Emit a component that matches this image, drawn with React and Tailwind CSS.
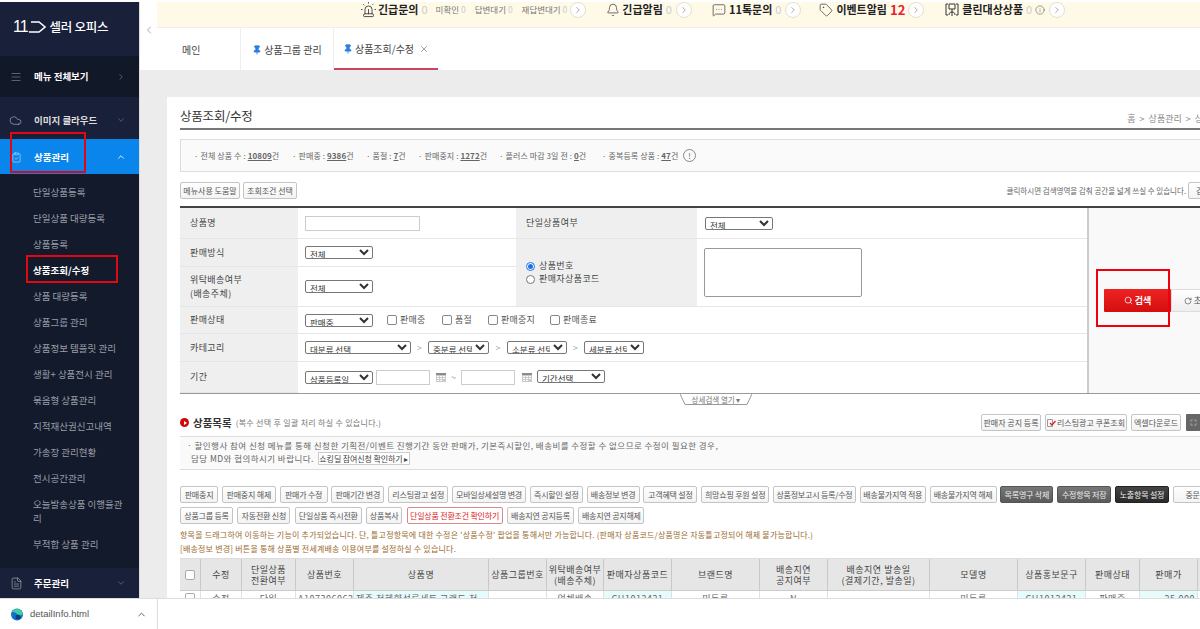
import { Menu, Cloud, ChevronRight, ChevronDown, ChevronUp, ChevronLeft, Bell, MessageSquareMore, Tag, Pin, X, Siren, Search, RotateCw, Info, FileText, ClipboardCheck, Maximize } from "lucide-react";

const subMenus = [
  "단일상품등록",
  "단일상품 대량등록",
  "상품등록",
  "상품조회/수정",
  "상품 대량등록",
  "상품그룹 관리",
  "상품정보 템플릿 관리",
  "생활+ 상품전시 관리",
  "묶음형 상품관리",
  "지적재산권신고내역",
  "가송장 관리현황",
  "전시공간관리",
  "오늘발송상품 이행율관리",
  "부적합 상품 관리",
];

const actionRow1 = [
  ["판매중지", "w-[38px]", "w"],
  ["판매중지 해제", "w-[54px]", "w"],
  ["판매가 수정", "w-[48px]", "w"],
  ["판매기간 변경", "w-[53px]", "w"],
  ["리스팅광고 설정", "w-[60px]", "w"],
  ["모바일상세설명 변경", "w-[74px]", "w"],
  ["즉시할인 설정", "w-[53px]", "w"],
  ["배송정보 변경", "w-[53px]", "w"],
  ["고객혜택 설정", "w-[54px]", "w"],
  ["희망쇼핑 후원 설정", "w-[68px]", "w"],
  ["상품정보고시 등록/수정", "w-[83px]", "w"],
  ["배송불가지역 적용", "w-[66px]", "w"],
  ["배송불가지역 해제", "w-[67px]", "w"],
  ["목록영구 삭제", "w-[53px]", "g"],
  ["수정항목 저장", "w-[54px]", "g"],
  ["노출항목 설정", "w-[54px]", "k"],
  ["중문번역", "w-[54px]", "w"],
];

const actionRow2 = [
  ["상품그룹 등록", "w-[53px]", "w"],
  ["자동전환 신청", "w-[53px]", "w"],
  ["단일상품 즉시전환", "w-[67px]", "w"],
  ["상품복사", "w-[36px]", "w"],
  ["단일상품 전환조건 확인하기", "w-[96px]", "r"],
  ["배송지연 공지등록", "w-[67px]", "w"],
  ["배송지연 공지해제", "w-[66px]", "w"],
];

const btnTone = {
  w: "border-[#c4c4c4] bg-gradient-to-b from-white to-[#f3f3f3] text-[#555]",
  g: "border-[#555] bg-gradient-to-b from-[#777] to-[#5a5a5a] text-[#eee]",
  k: "border-[#222] bg-gradient-to-b from-[#444] to-[#2a2a2a] text-[#eee]",
  r: "border-[#d88] bg-white text-[#d22]",
};

const headers = [
  ["chk"],
  ["수정"],
  ["단일상품", "전환여부"],
  ["상품번호"],
  ["상품명"],
  ["상품그룹번호"],
  ["위탁배송여부", "(배송주체)"],
  ["판매자상품코드"],
  ["브랜드명"],
  ["배송지연", "공지여부"],
  ["배송지연 발송일", "(결제기간, 발송일)"],
  ["모델명"],
  ["상품홍보문구"],
  ["판매상태"],
  ["판매가"],
  [""],
];

const bodyRow = [
  ["chk", ""],
  ["수정", ""],
  ["단일", ""],
  ["A107306062", ""],
  ["제주 천혜향석류세트 그랜드 천", "bg-[#e6fbfb] text-[#333] text-left"],
  ["", ""],
  ["업체배송", ""],
  ["CH1012421", "bg-[#e6fbfb]"],
  ["미등록", ""],
  ["N", ""],
  ["", ""],
  ["미등록", ""],
  ["CH1012421", "bg-[#e6fbfb]"],
  ["판매중", ""],
  ["25,000", "bg-[#e6fbfb] text-right"],
  ["", ""],
];

function Circle() {
  return (
    <span className="flex h-[16px] w-[16px] items-center justify-center rounded-full border border-[#e4e0d0] bg-white">
      <ChevronRight size={10} strokeWidth={1.5} className="text-[#777]" />
    </span>
  );
}

function Sel({ w, label }) {
  return (
    <select className={`h-[13px] rounded-[2px] border border-[#777] bg-white px-0 py-0 text-[8.5px] leading-none text-[#333] ${w}`}>
      <option>{label}</option>
    </select>
  );
}

function Label({ children, className = "" }) {
  return <div className={`flex items-center border-b border-[#e6e6e6] bg-[#efefef] pl-[10px] text-[9px] leading-[14px] tracking-[0.4px] text-[#444] ${className}`}>{children}</div>;
}

function Check({ label, w }) {
  return (
    <span className={`flex items-center gap-[3px] text-[9px] tracking-[0.2px] text-[#555] ${w}`}>
      <span className="h-[10px] w-[10px] rounded-[2px] border border-[#888] bg-white" />
      {label}
    </span>
  );
}

function Cal() {
  return (
    <svg width="10" height="9" viewBox="0 0 10 9">
      <rect width="10" height="9" fill="#c9c9c9" />
      <rect width="10" height="2" fill="#8a8a8a" />
      <path d="M1 3h2v1H1zM4 3h2v1H4zM7 3h2v1H7zM1 5h2v1H1zM4 5h2v1H4zM7 5h2v1H7zM1 7h2v1H1zM4 7h2v1H4z" fill="#fff" />
    </svg>
  );
}

function Btn({ children, className = "" }) {
  return <span className={`flex h-[17px] items-center justify-center whitespace-nowrap rounded-[2px] border border-[#c4c4c4] bg-gradient-to-b from-white to-[#f3f3f3] text-[8px] text-[#555] ${className}`}>{children}</span>;
}

function Sidebar() {
  return (
    <aside className="flex w-[140px] shrink-0 flex-col overflow-hidden border-r border-[#ddd] bg-[#131a2b] text-white">
      <div className="flex h-[54px] items-center bg-[#19203a] pb-[4px] pl-[13px]">
        <span className="font-['Liberation_Sans',sans-serif] text-[16px] leading-none tracking-[-1px]">11</span>
        <svg width="18" height="12" viewBox="0 0 18 12" fill="none" stroke="white" strokeWidth="1.5">
          <path d="M1 11H11L17 6L11 1H3" />
        </svg>
        <span className="ml-[4px] text-[12.5px] font-medium tracking-[-0.3px]">셀러 오피스</span>
      </div>
      <div className="flex h-[41px] items-center bg-[#111827] pl-[10px] pr-[13px]">
        <Menu size={12} strokeWidth={1} className="text-[#aaa]" />
        <span className="ml-[12px] flex-1 text-[9.5px] font-bold">메뉴 전체보기</span>
        <ChevronRight size={10} className="text-[#667]" />
      </div>
      <div className="flex h-[42px] items-center bg-[#19203a] pl-[9px] pr-[13px] pt-[4px]">
        <Cloud size={13} strokeWidth={1} className="text-[#ccc]" />
        <span className="ml-[12px] flex-1 text-[9.5px] font-bold text-[#ddd]">이미지 클라우드</span>
        <ChevronDown size={10} className="text-[#667]" />
      </div>
      <div className="flex h-[35px] items-center bg-[#0a85ec] pl-[11px] pr-[13px] pt-[1px]">
        <ClipboardCheck size={11} strokeWidth={1} />
        <span className="ml-[12px] flex-1 text-[9.5px] font-bold">상품관리</span>
        <ChevronUp size={10} />
      </div>
      <ul className="flex-1 pl-[33px] pr-[8px] pt-[5px]">
        {subMenus.map((m) => (
          <li key={m} className={`py-[6px] text-[9.5px] leading-[14px] ${m === "상품조회/수정" ? "font-bold text-white" : "text-[#9a9ea8]"}`}>
            {m}
          </li>
        ))}
      </ul>
      <div className="flex h-[30px] shrink-0 items-center bg-[#19203a] pl-[10px] pr-[13px]">
        <FileText size={13} strokeWidth={1} className="text-[#ccc]" />
        <span className="ml-[11px] flex-1 text-[9.5px] font-bold">주문관리</span>
        <ChevronDown size={10} className="text-[#667]" />
      </div>
    </aside>
  );
}

function NoticeBar() {
  const big = "text-[11px] font-bold text-[#222] whitespace-nowrap";
  const zero = "text-[11px] text-[#ccc]";
  const small = "text-[8.5px] text-[#777] whitespace-nowrap";
  return (
    <div className="flex h-[26px] items-center border-b border-[#eee] bg-[#fff9e8] pb-[10px] pl-[203px]">
      <Siren size={17} strokeWidth={1.2} className="text-[#333]" />
      <span className={`ml-[1px] ${big}`}>긴급문의</span>
      <span className={`ml-[3px] ${zero}`}>0</span>
      <span className={`ml-[8px] ${small}`}>미확인 <span className="text-[#ccc]">0</span></span>
      <span className={`ml-[9px] ${small}`}>답변대기 <span className="text-[#ccc]">0</span></span>
      <span className={`ml-[9px] ${small}`}>재답변대기 <span className="text-[#ccc]">0</span></span>
      <span className="ml-[3px]"><Circle /></span>
      <Bell size={14} strokeWidth={1.2} className="ml-[20px] text-[#333]" />
      <span className={`ml-[2px] ${big}`}>긴급알림</span>
      <span className={`ml-[3px] ${zero}`}>0</span>
      <span className="ml-[4px]"><Circle /></span>
      <MessageSquareMore size={14} strokeWidth={1.2} className="ml-[20px] text-[#333]" />
      <span className={`ml-[3px] ${big}`}>11톡문의</span>
      <span className={`ml-[3px] ${zero}`}>0</span>
      <span className="ml-[4px]"><Circle /></span>
      <Tag size={14} strokeWidth={1.2} className="ml-[18px] text-[#333]" />
      <span className={`ml-[3px] ${big}`}>이벤트알림</span>
      <span className="ml-[3px] text-[13px] font-bold text-[#e8202a]">12</span>
      <span className="ml-[3px]"><Circle /></span>
      <svg width="14" height="14" viewBox="0 0 14 14" fill="none" stroke="#333" strokeWidth="1" className="ml-[21px]">
        <path d="M3 1H1V12H3M11 1H13V12H11M4 1H10V6H4ZM7 6V13M7 9C5 9 4 10 4 12M7 9C9 9 10 10 10 12" />
      </svg>
      <span className={`ml-[3px] ${big}`}>클린대상상품</span>
      <span className={`ml-[3px] ${zero}`}>0</span>
      <Info size={10} strokeWidth={1.2} className="ml-[3px] text-[#444]" />
      <span className="ml-[4px]"><Circle /></span>
    </div>
  );
}

function Tabs() {
  return (
    <div className="flex h-[42px] bg-white text-[10px] text-[#444]">
      <div className="flex w-[84px] items-center border-r border-[#eee] pl-[25px] pt-[1px]">메인</div>
      <div className="flex w-[93px] items-center justify-center gap-[2px] border-r border-[#eee] pt-[1px]">
        <Pin size={10} className="fill-[#2a7de1] text-[#2a7de1]" />
        상품그룹 관리
      </div>
      <div className="flex w-[104px] items-center justify-center gap-[2px] border-b-2 border-[#c9455f] pt-[1px]">
        <Pin size={10} className="fill-[#2a7de1] text-[#2a7de1]" />
        상품조회/수정
        <X size={10} strokeWidth={1.2} className="ml-[3px]" />
      </div>
    </div>
  );
}

function SearchTable() {
  return (
    <div className="mt-[7px] flex border-t-2 border-b border-t-[#444] border-b-[#999]">
      <div className="grid w-[907px] shrink-0 grid-cols-[118px_218px_181px_390px] grid-rows-[31px_28px_40px_27px_28px_31px]">
        <Label>상품명</Label>
        <div className="flex items-center border-b border-[#e6e6e6] pl-[7px]">
          <input className="h-[15px] w-[115px] border border-[#ccc]" />
        </div>
        <Label>단일상품여부</Label>
        <div className="flex items-center border-b border-[#e6e6e6] pl-[8px]">
          <Sel w="w-[68px]" label="전체" />
        </div>

        <Label>판매방식</Label>
        <div className="flex items-center border-b border-[#e6e6e6] pl-[7px]">
          <Sel w="w-[68px]" label="전체" />
        </div>
        <div className="row-span-2 flex flex-col justify-center gap-[1px] border-b border-[#e6e6e6] bg-[#efefef] pl-[10px] text-[9px] tracking-[0.4px] text-[#444]">
          <span className="flex items-center gap-[4px] leading-[12px]">
            <span className="flex h-[9px] w-[9px] items-center justify-center rounded-full border border-[#1a73e8] bg-white">
              <span className="h-[5px] w-[5px] rounded-full bg-[#1a73e8]" />
            </span>
            상품번호
          </span>
          <span className="flex items-center gap-[4px] leading-[12px]">
            <span className="h-[9px] w-[9px] rounded-full border border-[#777] bg-white" />
            판매자상품코드
          </span>
        </div>
        <div className="row-span-2 flex items-center border-b border-[#e6e6e6] pl-[7px]">
          <textarea className="h-[49px] w-[158px] resize-none rounded-[2px] border border-[#999]" />
        </div>

        <Label>
          <span>
            위탁배송여부
            <br />
            (배송주체)
          </span>
        </Label>
        <div className="flex items-center border-b border-[#e6e6e6] pl-[7px]">
          <Sel w="w-[68px]" label="전체" />
        </div>

        <Label>판매상태</Label>
        <div className="col-span-3 flex items-center border-b border-[#e6e6e6] pl-[7px]">
          <Sel w="w-[68px]" label="판매중" />
          <span className="ml-[14px] flex">
            <Check label="판매중" w="w-[55px]" />
            <Check label="품절" w="w-[46px]" />
            <Check label="판매중지" w="w-[62px]" />
            <Check label="판매종료" w="w-[60px]" />
          </span>
        </div>

        <Label>카테고리</Label>
        <div className="col-span-3 flex items-center border-b border-[#e6e6e6] pl-[7px] text-[9px] text-[#aaa]">
          <Sel w="w-[106px]" label="대분류 선택" />
          <span className="w-[17px] text-center">&gt;</span>
          <Sel w="w-[61px]" label="중분류 선택" />
          <span className="w-[18px] text-center">&gt;</span>
          <Sel w="w-[60px]" label="소분류 선택" />
          <span className="w-[17px] text-center">&gt;</span>
          <Sel w="w-[60px]" label="세분류 선택" />
        </div>

        <Label>기간</Label>
        <div className="col-span-3 flex items-center pl-[7px] text-[9px] text-[#888]">
          <Sel w="w-[68px]" label="상품등록일" />
          <input className="ml-[3px] h-[15px] w-[54px] border border-[#ccc]" />
          <span className="ml-[6px]"><Cal /></span>
          <span className="w-[15px] text-center">~</span>
          <input className="h-[15px] w-[54px] border border-[#ccc]" />
          <span className="ml-[7px]"><Cal /></span>
          <span className="ml-[5px]"><Sel w="w-[68px]" label="기간선택" /></span>
        </div>
      </div>

      <div className="flex flex-1 items-center border-l-2 border-[#ccc] bg-[#f9f9f9] pl-[15px]">
        <span className="flex h-[23px] w-[67px] items-center justify-center gap-[2px] rounded-[1px] bg-gradient-to-b from-[#ee2222] to-[#d40d0d] text-[9px] font-bold text-white">
          <Search size={9} strokeWidth={2} />
          검색
        </span>
        <span className="flex h-[23px] w-[60px] items-center justify-center gap-[2px] border border-[#ddd] bg-gradient-to-b from-white to-[#eee] text-[9px] text-[#555]">
          <RotateCw size={8} />
          초기화
        </span>
      </div>
    </div>
  );
}

function ActionButton({ item }) {
  const [label, w, tone] = item;
  return (
    <span className={`flex h-[17px] shrink-0 items-center justify-center whitespace-nowrap rounded-[2px] border text-[8px] tracking-[-0.2px] ${w} ${btnTone[tone]}`}>
      {label}
    </span>
  );
}

function ProductTable() {
  const cols = "grid w-[1078px] grid-cols-[21px_41px_54px_58px_135px_58px_57px_68px_88px_68px_102px_88px_68px_54px_58px_60px]";
  return (
    <div className="mt-[2px] border-t border-[#ddd]">
      <div className={`${cols} h-[32px] border-b border-[#ccc] bg-[#e6e6e6]`}>
        {headers.map((h, i) => (
          <div key={i} className="flex flex-col items-center justify-center border-r border-[#c8c8c8] text-center text-[9px] leading-[11px] tracking-[0.5px] text-[#444]">
            {h[0] === "chk" ? <span className="h-[10px] w-[10px] rounded-[2px] border border-[#aaa] bg-white" /> : h.map((t) => <span key={t} className="whitespace-nowrap">{t}</span>)}
          </div>
        ))}
      </div>
      <div className={`${cols} h-[30px]`}>
        {bodyRow.map(([t, cls], i) => (
          <div key={i} className={`overflow-hidden whitespace-nowrap border-r border-[#e0e0e0] px-[2px] pt-[1px] text-center text-[9px] leading-[13px] tracking-[0.5px] text-[#666] ${cls}`}>
            {t === "chk" ? <span className="mt-[1px] inline-block h-[10px] w-[10px] rounded-[2px] border border-[#aaa]" /> : t}
          </div>
        ))}
      </div>
    </div>
  );
}

function Content() {
  return (
    <div className="flex-1 overflow-hidden bg-[#ececec] pl-[27px] pt-[27px]">
      <div className="h-[600px] w-[1100px] bg-white pl-[13px] pt-[10px]">
        <div className="w-[1070px]">
          <div className="flex h-[23px] items-center justify-between border-b-2 border-[#777] pb-[2px]">
            <h1 className="text-[12.5px] font-normal tracking-[-0.2px] text-[#333]">상품조회/수정</h1>
            <span className="whitespace-nowrap pr-[2px] pt-[5px] text-[9px] text-[#888]">홈 &nbsp;&gt;&nbsp; 상품관리 &nbsp;&gt;&nbsp; 상품조회/수정</span>
          </div>

          <div className="mt-[9px] flex h-[33px] items-center whitespace-nowrap border border-[#ddd] bg-[#fafafa] pl-[13px] text-[8px] tracking-[0.1px] text-[#666]">
            <span className="w-[98px]">· 전체 상품 수 : <b className="font-bold underline">10809</b>건</span>
            <span className="w-[74px]">· 판매중 : <b className="font-bold underline">9386</b>건</span>
            <span className="w-[52px]">· 품절 : <b className="font-bold underline">7</b>건</span>
            <span className="w-[81px]">· 판매중지 : <b className="font-bold underline">1272</b>건</span>
            <span className="w-[103px]">· 플러스 마감 3일 전 : <b className="font-bold underline">0</b>건</span>
            <span className="w-[81px]">· 중복등록 상품 : <b className="font-bold underline">47</b>건</span>
            <span className="flex h-[13px] w-[13px] items-center justify-center rounded-full border border-[#888] text-[8px]">!</span>
          </div>

          <div className="mt-[10px] flex items-center">
            <Btn className="w-[60px]">메뉴사용 도움말</Btn>
            <Btn className="ml-[3px] w-[54px]">조회조건 선택</Btn>
            <span className="ml-auto text-[7.5px] text-[#666]">클릭하시면 검색영역을 감춰 공간을 넓게 쓰실 수 있습니다.</span>
            <Btn className="ml-[2px] w-[62px]">검색영역 접기</Btn>
          </div>

          <SearchTable />

          <div className="relative ml-[500px] flex h-[11px] w-[72px] items-center justify-center text-[7.5px] text-[#777]">
            <svg width="72" height="11" viewBox="0 0 72 11" fill="none" stroke="#999" className="absolute inset-0">
              <path d="M0 0L5 10.5H67L72 0" />
            </svg>
            상세검색 열기 ▾
          </div>

          <div className="mt-[9px] flex h-[17px] items-center">
            <span className="flex h-[9px] w-[9px] items-center justify-center rounded-full bg-[#cc0a0a]">
              <span className="ml-[1px] h-0 w-0 border-y-[2px] border-l-[3px] border-y-transparent border-l-white" />
            </span>
            <span className="ml-[4px] text-[10.5px] font-bold text-[#333]">상품목록</span>
            <span className="ml-[4px] text-[8px] tracking-[0.3px] text-[#777]">(복수 선택 후 일괄 처리 하실 수 있습니다.)</span>
            <Btn className="ml-auto w-[60px]">판매자 공지 등록</Btn>
            <Btn className="ml-[4px] w-[82px] gap-[1px]">
              <svg width="9" height="8" viewBox="0 0 9 8" fill="none">
                <path d="M.5.5h5v7h-5z" stroke="#999" />
                <path d="M3 4l2 2 3.5-4" stroke="#d22" strokeWidth="1.4" />
              </svg>
              리스팅광고 쿠폰조회
            </Btn>
            <Btn className="ml-[4px] w-[50px]">엑셀다운로드</Btn>
            <span className="ml-[5px] mr-[44px] flex h-[17px] w-[20px] items-center justify-center rounded-[1px] bg-[#666] pr-[6px] text-[#ddd]">
              <Maximize size={7} />
            </span>
          </div>

          <div className="mt-[5px] h-[34px] border-y border-[#ddd] bg-[#fafafa] pl-[7px] pt-[2px] text-[8.5px] leading-[13px] tracking-[0.45px] text-[#666]">
            <p>· 할인행사 참여 신청 메뉴를 통해 신청한 기획전/이벤트 진행기간 동안 판매가, 기본즉시할인, 배송비를 수정할 수 없으므로 수정이 필요한 경우,</p>
            <p className="flex items-center pl-[4px]">
              담당 MD와 협의하시기 바랍니다.
              <span className="ml-[4px] flex h-[13px] w-[92px] items-center justify-center border border-[#ccc] bg-white text-[8px] tracking-[-0.1px] text-[#444]">쇼킹딜 참여신청 확인하기 ▸</span>
            </p>
          </div>

          <div className="mt-[16px] flex gap-[3.8px]">
            {actionRow1.map((a) => <ActionButton key={a[0]} item={a} />)}
          </div>
          <div className="mt-[4px] flex gap-[4.4px]">
            {actionRow2.map((a) => <ActionButton key={a[0]} item={a} />)}
          </div>

          <div className="mt-[4px] text-[8px] leading-[14px] tracking-[0.21px] text-[#9a6b2f]">
            <p className="whitespace-nowrap">항목을 드래그하여 이동하는 기능이 추가되었습니다. 단, 틀고정항목에 대한 수정은 '상품수정' 팝업을 통해서만 가능합니다. (판매자 상품코드/상품명은 자동틀고정되어 해제 불가능합니다.)</p>
            <p className="whitespace-nowrap">[배송정보 변경] 버튼을 통해 상품별 전세계배송 이용여부를 설정하실 수 있습니다.</p>
          </div>

          <ProductTable />
        </div>
      </div>
    </div>
  );
}

export default function App() {
  return (
    <div className="relative flex h-[629px] w-[1200px] flex-col overflow-hidden bg-white pt-[2px] font-['Noto_Sans_CJK_KR','Liberation_Sans',sans-serif]">
      <div className="flex h-[596px]">
        <Sidebar />
        <div className="flex min-w-0 flex-1 flex-col">
          <div className="flex h-[68px] shrink-0">
            <div className="flex w-[17px] shrink-0 items-center justify-center pb-[12px] text-[#aaa]">
              <ChevronLeft size={12} />
            </div>
            <div className="flex min-w-0 flex-1 flex-col">
              <NoticeBar />
              <Tabs />
            </div>
          </div>
          <Content />
        </div>
      </div>

      <div className="flex h-[31px] shrink-0 items-center border-t border-[#ddd] bg-white pl-[11px]">
        <svg width="12" height="13" viewBox="0 0 12 13">
          <circle cx="6" cy="6.5" r="6" fill="#1470c8" />
          <path d="M1 4C3 0 10 0 11.5 5C12 7.5 9 8 6 7.5C7 5.5 3.5 3.5 1 4Z" fill="#3fd0a0" />
          <circle cx="7" cy="9" r="2.5" fill="#0b3f8a" />
        </svg>
        <span className="ml-[7px] font-['Liberation_Sans',sans-serif] text-[9.5px] text-[#555]">detailInfo.html</span>
        <ChevronUp size={11} className="ml-[47px] text-[#555]" />
        <span className="ml-[10px] h-[31px] w-px bg-[#ddd]" />
      </div>

      {/* 빨간 주석 박스 */}
      <div className="absolute left-[10px] top-[132px] h-[41px] w-[76px] border-[2.5px] border-[#e30613]" />
      <div className="absolute left-[26px] top-[255px] h-[28px] w-[92px] border-[2.5px] border-[#e30613]" />
      <div className="absolute left-[1096px] top-[269px] h-[58px] w-[74px] border-[2.5px] border-[#f0000f]" />
    </div>
  );
}
